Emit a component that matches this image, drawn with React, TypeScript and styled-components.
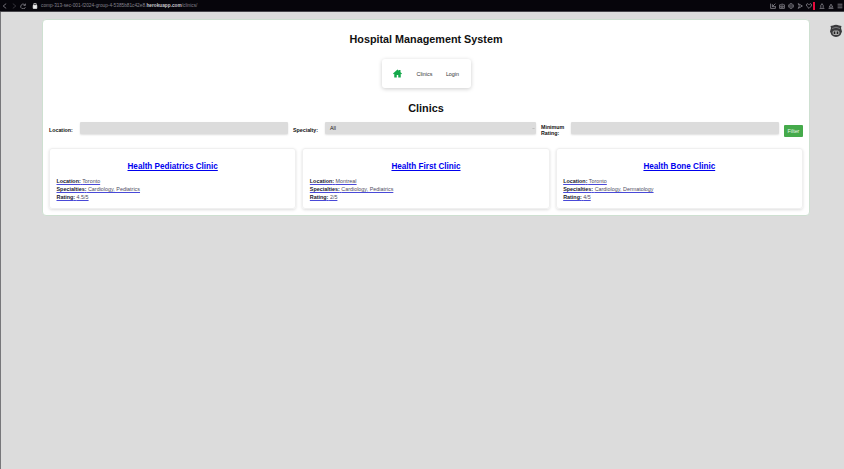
import React from "react";
import styled, { createGlobalStyle } from "styled-components";

const GlobalStyle = createGlobalStyle`
  * { box-sizing: border-box; }
  body { margin: 0; background: #dcdcdc; overflow: hidden; font-family: "Liberation Sans", Arial, sans-serif; color: #111; }
`;
const Screen = styled.div`position: relative; height: 469px; border-left: 1px solid #77777a; background: #dcdcdc;`;
const BrowserBar = styled.header`
  height: 12px; margin-left: -1px; padding: 0 1px 0 2px; background: #06050b; color: #8e8c94;
  display: flex; align-items: center; border-bottom: 1px solid #47464b;
`;
const BarGlyph = styled.svg<{ $gap?: number; $size?: number }>`
  width: ${p => p.$size ?? 6}px; height: ${p => p.$size ?? 6}px; margin-right: ${p => p.$gap ?? 3}px;
  flex: none; fill: none; stroke: currentColor; stroke-width: 1.3;
`;
const Address = styled.div`font-size: 4.76px; line-height: 8px; color: #85828d; white-space: nowrap; width: 160px;`;
const Host = styled.b`color: #c9c7ce;`;
const BarActions = styled.div`margin-left: auto; display: flex; align-items: center;`;
const RedMark = styled.i`width: 2px; height: 8px; background: #e70b3b; margin: 0 4px 0 0;`;
const Panel = styled.main`
  width: 768px; height: 197px; margin: 7px 0 0 41px; padding: 0 6px; background: #fff;
  border: 1px solid #cee0d1; border-radius: 4px; display: flex; flex-direction: column; align-items: center;
`;
const Title = styled.h1`font-size: 10.8px; line-height: 14px; margin: 12px 0 0;`;
const Nav = styled.nav`
  width: 89px; height: 29px; margin-top: 13px; padding-left: 11px; border-radius: 3px;
  box-shadow: 0 1px 4px #0003; display: flex; align-items: center; font-size: 5.4px; color: #333;
`;
const HomeIcon = styled.svg`width: 9px; height: 9px; margin-right: 15px; margin-top: -1px; fill: #13a84a; flex: none;`;
const NavLink = styled.span`margin-right: 13.5px;`;
const Heading = styled.h2`font-size: 10.9px; line-height: 14px; margin: 13px 0 0;`;
const FilterBar = styled.form`
  width: 754px; height: 16px; margin-top: 7px; display: grid;
  grid-template-columns: 31px 208px 5px 32px 211px 5px 30px 208px 5px 19px;
  font-size: 5.3px;
`;
const Label = styled.label<{ $top?: number }>`font-weight: bold; line-height: 6px; padding-top: ${p => p.$top ?? 4.5}px;`;
const Field = styled.div`
  height: 12px; padding: 0 5px; background: #dcdcdc; border-radius: 1px;
  box-shadow: 0 1px 2px #0002; line-height: 12px; font-size: 5.3px; display: flex; justify-content: space-between;
`;
const Chevron = styled.svg`width: 3px; height: 3px; margin: 5px -4px 0 0; fill: none; stroke: #999;`;
const FilterButton = styled.button`
  height: 12px; margin-top: 3px; padding: 0; border: 0; border-radius: 1px; background: #45aa4b;
  color: #e9f6e9; font: 5.3px/12px "Liberation Sans", Arial, sans-serif;
`;
const Cards = styled.section`width: 754px; margin-top: 10px; display: grid; grid-template-columns: repeat(3, 1fr); gap: 6px;`;
const Card = styled.article`
  height: 61px; padding: 13px 6.5px 0; border: 1px solid #f0f0f0; border-radius: 3px;
  box-shadow: 0 1px 3px #0002;
`;
const ClinicName = styled.h3`margin: 0 0 5px; color: #0000ee; font-size: 8.15px; line-height: 10px; text-align: center; text-decoration: underline;`;
const Detail = styled.p`margin: 0; font-size: 5.4px; line-height: 8px; text-decoration: underline; text-decoration-color: #4949d8;`;
const Term = styled.b`color: #181830;`;
const Value = styled.span`color: #4d4d61;`;
const Extension = styled.svg`position: absolute; right: 1px; top: 24px; width: 14px; height: 14px;`;

const clinics = [
  { name: "Health Pediatrics Clinic", location: "Toronto", specialties: "Cardiology, Pediatrics", rating: "4.5/5" },
  { name: "Health First Clinic", location: "Montreal", specialties: "Cardiology, Pediatrics", rating: "2/5" },
  { name: "Health Bone Clinic", location: "Toronto", specialties: "Cardiology, Dermatology", rating: "4/5" },
];
const Row = ({ label, value }: { label: string; value: string }) => (
  <Detail><Term>{label}:</Term> <Value>{value}</Value></Detail>
);
const actions = [
  "M1 1v8h8V5M9 1L4 6M4 2v4h4", "M1 3h2l1-1h3l1 1h1v6H1ZM3 5h4v2H3Z",
  "M5 1a4 4 0 1 0 .1 0M5 3a2 2 0 1 0 .1 0", "M2 1l7 4-7 4 2-4Z",
  "M5 9L1 5V2l2-1 2 2 2-2 2 1v3Z", "M3 8V4l2-3 2 3v4M1 9h8", "M5 2L8 7H2ZM1 9h8", "M1 2h8M1 5h8M1 8h8",
];

export default function App() {
  return <>
    <GlobalStyle />
    <Screen>
      <BrowserBar>
        <BarGlyph viewBox="0 0 10 10"><path d="M7 1L2 5l5 4" /></BarGlyph>
        <BarGlyph viewBox="0 0 10 10" opacity=".45"><path d="M3 1l5 4-5 4" /></BarGlyph>
        <BarGlyph viewBox="0 0 10 10" $gap={6}><path d="M8 3a4 4 0 1 0 1 4M9 1v3H6" /></BarGlyph>
        <BarGlyph viewBox="0 0 10 10" $gap={3}><path d="M3 5V1h4v4" stroke="#ddd" /><path d="M2 4h6v5H2Z" fill="#eee" stroke="#eee" /></BarGlyph>
        <Address>comp-313-sec-001-f2024-group-4-5385b81c42e8.<Host>herokuapp.com</Host>/clinics/</Address>
        <BarActions>
          {actions.map((d, i) => <React.Fragment key={d}>
            <BarGlyph viewBox="0 0 10 10" $gap={i === 7 ? 0 : i === 4 ? 1 : 3}><path d={d} /></BarGlyph>
            {i === 4 && <RedMark />}
          </React.Fragment>)}
        </BarActions>
      </BrowserBar>
      <Panel>
        <Title>Hospital Management System</Title>
        <Nav>
          <HomeIcon viewBox="0 0 18 18"><path d="M0 9L9 1l3 2.700V2h3v4.400L18 9l-1.500 1.500-1-.8V17h-5v-5h-3v5h-5V9.700l-1 .8Z" /></HomeIcon>
          <NavLink>Clinics</NavLink><span>Login</span>
        </Nav>
        <Heading>Clinics</Heading>
        <FilterBar>
          <Label>Location:</Label><Field /><span />
          <Label>Specialty:</Label><Field>All<Chevron viewBox="0 0 6 6"><path d="M1 2l2 2 2-2" /></Chevron></Field><span />
          <Label $top={2}>Minimum Rating:</Label><Field /><span />
          <FilterButton type="button">Filter</FilterButton>
        </FilterBar>
        <Cards>
          {clinics.map(c => <Card key={c.name}>
            <ClinicName>{c.name}</ClinicName>
            <Row label="Location" value={c.location} />
            <Row label="Specialties" value={c.specialties} />
            <Row label="Rating" value={c.rating} />
          </Card>)}
        </Cards>
      </Panel>
      <Extension viewBox="0 0 28 28">
        <path d="M4 8L3 4l5-1q6-3 12 0l5 1-1 4 2 7-3 7q-9 8-18 0l-3-7Z" fill="#39393b" />
        <path d="M6 9q8-5 16 0" fill="none" stroke="#929294" strokeWidth="1.500" />
        <rect x="7" y="13" width="14" height="9" rx="4" fill="#aaa" />
        <path d="M11 15v5M17 15v5" stroke="#222" strokeWidth="3" />
      </Extension>
    </Screen>
  </>;
}
